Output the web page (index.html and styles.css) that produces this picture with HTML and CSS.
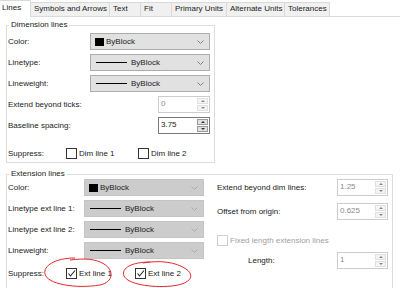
FILE: index.html
```html
<!DOCTYPE html>
<html lang="en">
<head>
  <meta charset="UTF-8" />
  <title>Modify Dimension Style - Lines</title>
  <link rel="stylesheet" href="styles.css">
</head>
<body>
  <div class="tabs">
    <div class="tab active">Lines</div>
    <div class="tab">Symbols and Arrows</div>
    <div class="tab">Text</div>
    <div class="tab">Fit</div>
    <div class="tab">Primary Units</div>
    <div class="tab">Alternate Units</div>
    <div class="tab">Tolerances</div>
  </div>

  <div class="page">
    <fieldset class="group dim">
      <legend>Dimension lines</legend>

      <div class="row">
        <span class="label">Color:</span>
        <div class="combo">
          <span class="swatch"></span><span>ByBlock</span>
          <svg class="chev" width="7" height="4"><path d="M0.5 0.5 L3.5 3.5 L6.5 0.5" /></svg>
        </div>
      </div>
      <div class="row">
        <span class="label">Linetype:</span>
        <div class="combo">
          <span class="ltype"></span><span>ByBlock</span>
          <svg class="chev" width="7" height="4"><path d="M0.5 0.5 L3.5 3.5 L6.5 0.5" /></svg>
        </div>
      </div>
      <div class="row">
        <span class="label">Lineweight:</span>
        <div class="combo">
          <span class="ltype"></span><span>ByBlock</span>
          <svg class="chev" width="7" height="4"><path d="M0.5 0.5 L3.5 3.5 L6.5 0.5" /></svg>
        </div>
      </div>
      <div class="row">
        <span class="label">Extend beyond ticks:</span>
        <div class="spin off">
          <span class="val">0</span>
          <div class="btns"><span class="up"></span><span class="down"></span></div>
        </div>
      </div>
      <div class="row">
        <span class="label">Baseline spacing:</span>
        <div class="spin">
          <span class="val">3.75</span>
          <div class="btns"><span class="up"></span><span class="down"></span></div>
        </div>
      </div>
      <div class="row suppress">
        <span class="label short">Suppress:</span>
        <div class="check"><span class="box"></span>Dim line 1</div>
        <div class="check"><span class="box"></span>Dim line 2</div>
      </div>
    </fieldset>

    <fieldset class="group ext">
      <legend>Extension lines</legend>
      <div class="cols">
        <div class="col-left">
          <div class="row">
            <span class="label">Color:</span>
            <div class="combo dis">
              <span class="swatch"></span><span>ByBlock</span>
              <svg class="chev" width="7" height="4"><path d="M0.5 0.5 L3.5 3.5 L6.5 0.5" /></svg>
            </div>
          </div>
          <div class="row">
            <span class="label">Linetype ext line 1:</span>
            <div class="combo dis">
              <span class="ltype"></span><span>ByBlock</span>
              <svg class="chev" width="7" height="4"><path d="M0.5 0.5 L3.5 3.5 L6.5 0.5" /></svg>
            </div>
          </div>
          <div class="row">
            <span class="label">Linetype ext line 2:</span>
            <div class="combo dis">
              <span class="ltype"></span><span>ByBlock</span>
              <svg class="chev" width="7" height="4"><path d="M0.5 0.5 L3.5 3.5 L6.5 0.5" /></svg>
            </div>
          </div>
          <div class="row">
            <span class="label">Lineweight:</span>
            <div class="combo dis">
              <span class="ltype"></span><span>ByBlock</span>
              <svg class="chev" width="7" height="4"><path d="M0.5 0.5 L3.5 3.5 L6.5 0.5" /></svg>
            </div>
          </div>
          <div class="row suppress ext-sup">
            <span class="label short">Suppress:</span>
            <div class="check">
              <span class="box"><svg width="9" height="9"><path d="M1.5 4.5 L3.5 7 L8 1.5" /></svg></span>Ext line 1
            </div>
            <div class="check">
              <span class="box"><svg width="9" height="9"><path d="M1.5 4.5 L3.5 7 L8 1.5" /></svg></span>Ext line 2
            </div>
          </div>
        </div>

        <div class="col-right">
          <div class="row">
            <span class="label wide">Extend beyond dim lines:</span>
            <div class="spin off">
              <span class="val">1.25</span>
              <div class="btns"><span class="up"></span><span class="down"></span></div>
            </div>
          </div>
          <div class="row r2">
            <span class="label wide">Offset from origin:</span>
            <div class="spin off">
              <span class="val">0.625</span>
              <div class="btns"><span class="up"></span><span class="down"></span></div>
            </div>
          </div>
          <div class="check disabled fixed"><span class="box"></span>Fixed length extension lines</div>
          <div class="row r4">
            <span class="label wide indent">Length:</span>
            <div class="spin off">
              <span class="val">1</span>
              <div class="btns"><span class="up"></span><span class="down"></span></div>
            </div>
          </div>
        </div>
      </div>
    </fieldset>
  </div>

  <!-- red hand-drawn marks -->
  <svg class="marks" width="400" height="288">
    <path d="M75 258 C55 258 43 266 45 274 C47 284 75 289 100 285 C114 282 114 270 104 264 C96 259 85 258 70 260" />
    <path d="M150 262 C132 262 121 268 124 276 C128 284 150 288 172 286 C190 284 196 276 186 269 C176 262 160 260 143 263" />
  </svg>
</body>
</html>
```

FILE: styles.css
```css
body {
  margin: 0;
  width: 400px;
  height: 288px;
  overflow: hidden;
  background: #fff;
  font-family: "Liberation Sans", Arial, sans-serif;
  font-size: 8px;
  color: #222;
}

.tabs {
  display: flex;
  align-items: flex-end;
  height: 16px;
  border-bottom: 1px solid #dadada;
}
.tab {
  box-sizing: border-box;
  height: 14px;
  line-height: 12px;
  padding-left: 3px;
  background: #f0f0f0;
  border: 1px solid #d9d9d9;
  border-left: none;
  border-bottom: none;
  white-space: nowrap;
  overflow: hidden;
}
.tab:nth-child(1) { width: 31px; }
.tab:nth-child(2) { width: 79px; }
.tab:nth-child(3) { width: 31px; }
.tab:nth-child(4) { width: 31px; }
.tab:nth-child(5) { width: 55px; }
.tab:nth-child(6) { width: 58px; }
.tab:nth-child(7) { width: 45px; }
.tab.active {
  height: 17px;
  margin-bottom: -1px;
  background: #fff;
  line-height: 14px;
  padding-left: 2px;
}

.page {
  padding: 0 0 0 6px;
}

.group {
  margin: 0;
  padding: 0 4px 2px 1px;
  border: 1px solid #dcdcdc;
  box-sizing: border-box;
}
.group legend {
  padding: 0 2px;
  margin-left: 1px;
  line-height: 10px;
}
.dim {
  width: 203px;
  margin-top: 3px;
  padding-top: 3px;
  display: flex;
  flex-direction: column;
  gap: 4px;
}
.ext {
  width: 387px;
  margin-top: 6px;
  height: 125px;
}

.row {
  display: flex;
  align-items: center;
  height: 17px;
}
.label {
  width: 75px;
  flex: 0 0 75px;
  white-space: nowrap;
}
.label.short {
  width: 58px;
  flex-basis: 58px;
}
.label.wide {
  width: 120px;
  flex-basis: 120px;
}
.label.indent {
  padding-left: 31px;
  box-sizing: border-box;
}
.suppress {
  height: 14px;
  margin-top: 8px;
}

.combo {
  box-sizing: border-box;
  width: 120px;
  height: 17px;
  margin-left: auto;
  display: flex;
  align-items: center;
  padding: 0 5px 0 4px;
  background: #e1e1e1;
  border: 1px solid #adadad;
}
.combo.dis {
  background: #cccccc;
  border-color: #c4c4c4;
}
.swatch {
  width: 9px;
  height: 8px;
  background: #000;
  margin-right: 2px;
}
.ltype {
  width: 31px;
  height: 1px;
  background: #000;
  margin: 0 4px 0 1px;
}
.chev {
  margin-left: auto;
  fill: none;
  stroke: #808080;
  stroke-width: 1;
}
.combo.dis .chev {
  stroke: #aaa;
}

.spin {
  box-sizing: border-box;
  width: 52px;
  height: 17px;
  margin-left: auto;
  display: flex;
  background: #fff;
  border: 1px solid #7a7a7a;
}
.spin .val {
  flex: 1;
  padding: 1px 0 0 2px;
  line-height: 12px;
}
.spin.off {
  border-color: #cccccc;
}
.spin.off .val {
  color: #8a8a8a;
}
.btns {
  width: 11px;
  display: flex;
  flex-direction: column;
  gap: 1px;
  padding: 1px;
}
.btns span {
  flex: 1;
  display: flex;
  align-items: center;
  justify-content: center;
  background: #e1e1e1;
  border: 1px solid #9a9a9a;
}
.spin.off .btns span {
  background: #f4f4f4;
  border-color: #e0e0e0;
}
.btns .up::after,
.btns .down::after {
  content: "";
  border-left: 2px solid transparent;
  border-right: 2px solid transparent;
}
.btns .up::after {
  border-bottom: 2px solid #333;
}
.btns .down::after {
  border-top: 2px solid #333;
}
.spin.off .btns .up::after {
  border-bottom-color: #888;
}
.spin.off .btns .down::after {
  border-top-color: #888;
}

.check {
  display: flex;
  align-items: center;
  width: 72px;
  white-space: nowrap;
}
.check .box {
  box-sizing: border-box;
  width: 11px;
  height: 11px;
  margin-right: 2px;
  border: 1px solid #333;
  background: #fff;
  display: flex;
  align-items: center;
  justify-content: center;
}
.check .box svg {
  fill: none;
  stroke: #222;
  stroke-width: 1.1;
}
.check.disabled {
  color: #a0a0a0;
}
.check.disabled .box {
  border-color: #cfcfcf;
}

.cols {
  display: flex;
}
.col-left {
  width: 196px;
  display: flex;
  flex-direction: column;
  gap: 4px;
}
.ext-sup {
  margin-top: 3px;
}
.col-right {
  flex: 1;
  margin-left: 13px;
  display: flex;
  flex-direction: column;
}
.col-right .spin {
  width: 51px;
}
.r2 {
  margin-top: 7px;
}
.fixed {
  width: auto;
  height: 14px;
  margin-top: 13px;
}
.r4 {
  margin-top: 5px;
}

.marks {
  position: absolute;
  left: 0;
  top: 0;
  pointer-events: none;
}
.marks path {
  fill: none;
  stroke: #e3262f;
  stroke-width: 1;
}
```
